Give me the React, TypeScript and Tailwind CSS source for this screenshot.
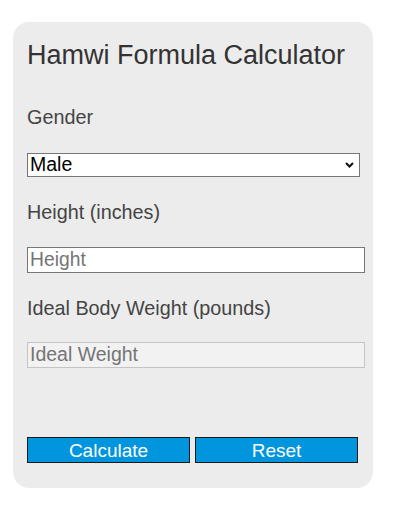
import React from "react";

export default function App() {
  const font = { fontFamily: '"Liberation Sans", Arial, sans-serif' };
  return (
    <div className="w-[407px] h-[511px] bg-white" style={font}>
      <div className="ml-[13px] mt-[22px] w-[360px] h-[466px] bg-[#ececec] rounded-[16px] pl-[14px] pt-[18px] flex flex-col">
        <h1 className="text-[27px] leading-[31px] text-[#333333] font-normal">Hamwi Formula Calculator</h1>
        <div className="mt-[35px] text-[19.8px] leading-[23px] text-[#444444]">Gender</div>
        <div className="mt-[24px] relative w-[333px] h-[24px] bg-white border border-[#767676] flex items-center">
          <span className="pl-[2px] text-[19.5px] text-black leading-none">Male</span>
          <svg className="absolute right-[5px] top-[8px]" width="9" height="6" viewBox="0 0 9 6">
            <path d="M1 1 L4.5 4.5 L8 1" fill="none" stroke="#111" strokeWidth="2" />
          </svg>
        </div>
        <div className="mt-[24px] text-[19.8px] leading-[23px] text-[#444444]">Height (inches)</div>
        <div className="mt-[23px] w-[338px] h-[26px] bg-white border border-[#767676] flex items-center">
          <span className="pl-[2px] text-[19.3px] text-[#757575] leading-none">Height</span>
        </div>
        <div className="mt-[24px] text-[19.8px] leading-[23px] text-[#444444]">Ideal Body Weight (pounds)</div>
        <div className="mt-[22px] w-[338px] h-[26px] bg-[#f2f2f2] border border-[#c4c4c4] flex items-center">
          <span className="pl-[2px] text-[19.5px] text-[#757575] leading-none">Ideal Weight</span>
        </div>
        <div className="mt-[69px] flex gap-[5px]">
          <div className="w-[163px] h-[26px] bg-[#0095dd] border border-[#1a1a1a] flex items-center justify-center text-white text-[19px] leading-none">Calculate</div>
          <div className="w-[163px] h-[26px] bg-[#0095dd] border border-[#1a1a1a] flex items-center justify-center text-white text-[19px] leading-none">Reset</div>
        </div>
      </div>
    </div>
  );
}
